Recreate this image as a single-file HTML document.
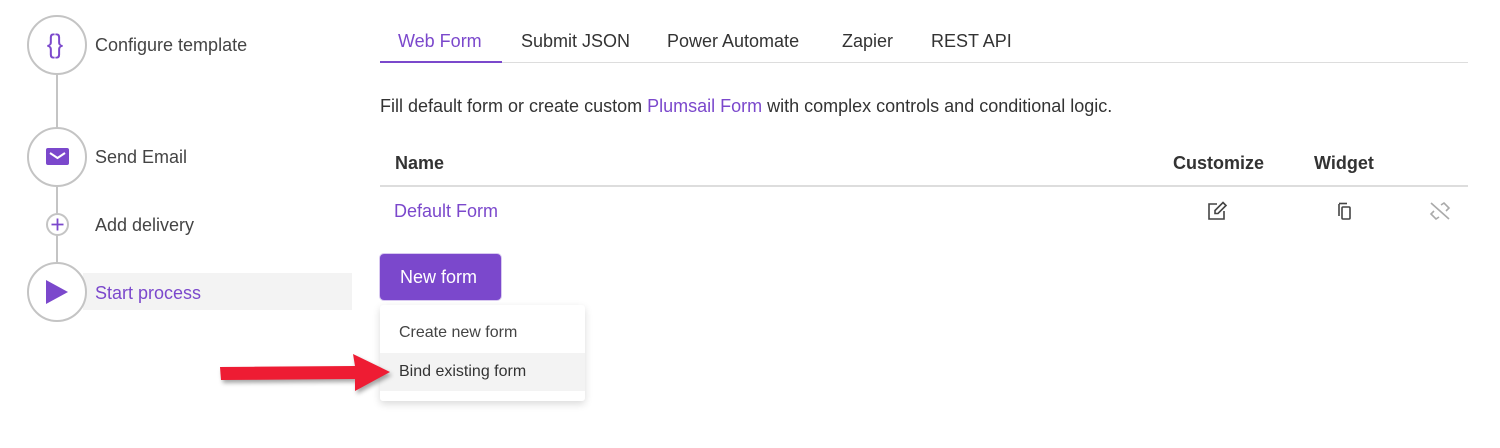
<!DOCTYPE html>
<html><head><style>
*{margin:0;padding:0;box-sizing:border-box}
body{width:1500px;height:448px;background:#fff;font-family:"Liberation Sans",sans-serif;color:#333;position:relative;overflow:hidden}
.a{position:absolute;white-space:nowrap}
.c{position:absolute;border:2px solid #c4c4c4;border-radius:50%;background:#fff}
.t{font-size:18px;color:#444}
.p{color:#7b48cc}
</style></head><body>
<div class="a" style="left:56px;top:70px;width:2px;height:240px;background:#c4c4c4"></div>
<div class="a" style="left:83px;top:273px;width:269px;height:37px;background:#f3f3f3"></div>
<div class="c" style="left:27px;top:15px;width:60px;height:60px"></div>
<div class="a p" style="left:46px;top:29px;font-size:27px;line-height:30px;transform:scaleX(0.9)">{}</div>
<div class="c" style="left:27px;top:127px;width:60px;height:60px"></div>
<svg class="a" style="left:46px;top:148px" width="23" height="18"><rect width="23" height="17" rx="2" fill="#7b48cc"/><path d="M4 5 L11.5 10 L19 5" stroke="#fff" stroke-width="2" fill="none"/></svg>
<div class="c" style="left:46px;top:213px;width:23px;height:23px"></div>
<svg class="a" style="left:46px;top:213px" width="23" height="23"><path d="M11.5 5.5v12M5.5 11.5h12" stroke="#7b48cc" stroke-width="1.8"/></svg>
<div class="c" style="left:27px;top:262px;width:60px;height:60px"></div>
<svg class="a" style="left:45px;top:279px" width="24" height="26"><path d="M1 1 L23 13 L1 25Z" fill="#7b48cc"/></svg>
<div class="a t" style="left:95px;top:35px">Configure template</div>
<div class="a t" style="left:95px;top:147px">Send Email</div>
<div class="a t" style="left:95px;top:215px">Add delivery</div>
<div class="a t p" style="left:95px;top:283px">Start process</div>

<div class="a" style="left:380px;top:62px;width:1088px;height:1px;background:#ddd"></div>
<div class="a" style="left:380px;top:61px;width:122px;height:2px;background:#7b48cc"></div>
<div class="a t p" style="left:398px;top:31px">Web Form</div>
<div class="a t" style="left:521px;top:31px;color:#333">Submit JSON</div>
<div class="a t" style="left:667px;top:31px;color:#333">Power Automate</div>
<div class="a t" style="left:842px;top:31px;color:#333">Zapier</div>
<div class="a t" style="left:931px;top:31px;color:#333">REST API</div>
<div class="a t" style="left:380px;top:96px;color:#333">Fill default form or create custom <span class="p">Plumsail Form</span> with complex controls and conditional logic.</div>
<div class="a t" style="left:395px;top:153px;font-weight:bold;color:#333">Name</div>
<div class="a t" style="left:1173px;top:153px;font-weight:bold;color:#333">Customize</div>
<div class="a t" style="left:1314px;top:153px;font-weight:bold;color:#333">Widget</div>
<div class="a" style="left:380px;top:185px;width:1088px;height:2px;background:#ddd"></div>
<div class="a t p" style="left:394px;top:201px">Default Form</div>
<svg class="a" style="left:1207px;top:201px" width="22" height="20" fill="none" stroke="#444" stroke-width="1.6"><path d="M10 3H2v15h15v-8"/><path d="M16 1.5l3 3-8 8H8v-3z"/></svg>
<svg class="a" style="left:1337px;top:202px" width="18" height="18" fill="none" stroke="#444" stroke-width="1.6"><path d="M2 2v12"/><path d="M2 1.5h8"/><rect x="5" y="5" width="8" height="12" rx="1"/></svg>
<svg class="a" style="left:1429px;top:201px" width="22" height="20" fill="none" stroke="#aaa" stroke-width="1.6"><path d="M2 2l18 16"/><path d="M12 4l3-2 5 5-3 3M10 16l-3 2-5-5 3-3"/></svg>

<div class="a" style="left:379px;top:253px;width:123px;height:48px;border:1px solid #d8c9f0;border-radius:5px;background:#7b48cc"></div>
<div class="a" style="left:400px;top:267px;font-size:18px;color:#fff">New form</div>
<div class="a" style="left:380px;top:305px;width:205px;height:96px;background:#fff;box-shadow:0 3px 8px rgba(0,0,0,.15);border-radius:3px"></div>
<div class="a" style="left:380px;top:353px;width:205px;height:38px;background:#f3f3f3"></div>
<div class="a" style="left:399px;top:324px;font-size:16px;color:#444">Create new form</div>
<div class="a" style="left:399px;top:363px;font-size:16px;color:#333">Bind existing form</div>
<svg class="a" style="left:215px;top:350px" width="180" height="48"><path d="M5 17 L140 16 L138 4 L175 22 L140 41 L140 29 L6 30Z" fill="#ee1c33" style="filter:drop-shadow(2px 3px 2px rgba(0,0,0,.35))"/></svg>
</body></html>
